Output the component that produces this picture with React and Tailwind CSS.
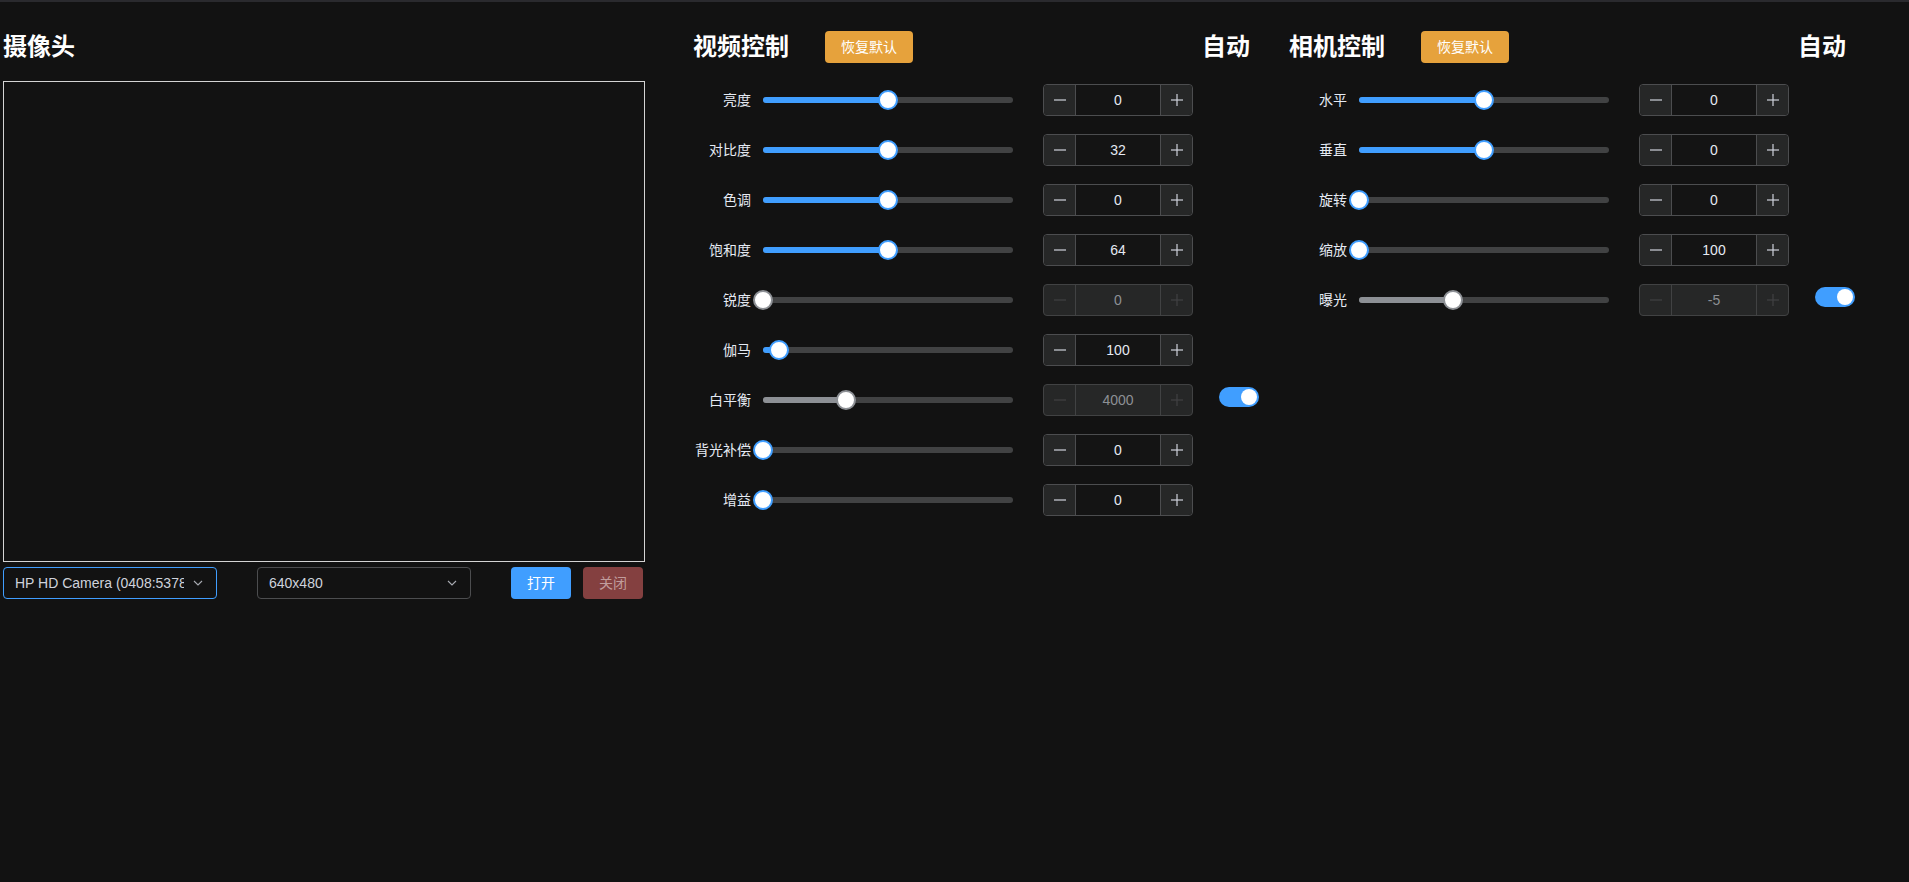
import React from "react";

const FONT = { fontFamily: '"Liberation Sans", "Noto Sans CJK SC", sans-serif' };

function MinusIcon({ color }) {
  return (
    <svg width="14" height="14" viewBox="0 0 14 14">
      <line x1="1" y1="7" x2="13" y2="7" stroke={color} strokeWidth="1.2" />
    </svg>
  );
}
function PlusIcon({ color }) {
  return (
    <svg width="14" height="14" viewBox="0 0 14 14">
      <line x1="1" y1="7" x2="13" y2="7" stroke={color} strokeWidth="1.2" />
      <line x1="7" y1="1" x2="7" y2="13" stroke={color} strokeWidth="1.2" />
    </svg>
  );
}

function Slider({ pct, disabled }) {
  return (
    <div className="relative w-[250px] h-[6px] rounded-full bg-[#414243]">
      <div
        className={
          disabled
            ? "absolute left-0 top-0 h-full rounded-full bg-[#8d9095]"
            : "absolute left-0 top-0 h-full rounded-full bg-[#409eff]"
        }
        style={{ width: pct + "%" }}
      />
      <div
        className={
          disabled
            ? "absolute top-1/2 w-[20px] h-[20px] -translate-x-1/2 -translate-y-1/2 rounded-full bg-white border-2 border-[#8d9095]"
            : "absolute top-1/2 w-[20px] h-[20px] -translate-x-1/2 -translate-y-1/2 rounded-full bg-white border-2 border-[#409eff]"
        }
        style={{ left: pct + "%" }}
      />
    </div>
  );
}

function InputNumber({ value, disabled }) {
  if (disabled) {
    return (
      <div className="flex w-[150px] h-[32px] rounded-[4px] border border-[#414243] bg-[#262727]">
        <div className="w-[32px] flex items-center justify-center border-r border-[#414243]">
          <MinusIcon color="#414243" />
        </div>
        <div className="flex-1 flex items-center justify-center text-[14px] text-[#8d9095]">{value}</div>
        <div className="w-[32px] flex items-center justify-center border-l border-[#414243]">
          <PlusIcon color="#414243" />
        </div>
      </div>
    );
  }
  return (
    <div className="flex w-[150px] h-[32px] rounded-[4px] border border-[#4c4d4f] bg-[#141414]">
      <div className="w-[32px] flex items-center justify-center border-r border-[#4c4d4f] bg-[#262727] rounded-l-[4px]">
        <MinusIcon color="#cfd3dc" />
      </div>
      <div className="flex-1 flex items-center justify-center text-[14px] text-[#e5eaf3]">{value}</div>
      <div className="w-[32px] flex items-center justify-center border-l border-[#4c4d4f] bg-[#262727] rounded-r-[4px]">
        <PlusIcon color="#cfd3dc" />
      </div>
    </div>
  );
}

function Toggle() {
  return (
    <div className="ml-[26px] mb-[6px] w-[40px] h-[20px] rounded-full bg-[#409eff] flex items-center justify-end pr-[2px]">
      <div className="w-[16px] h-[16px] rounded-full bg-white" />
    </div>
  );
}

function Row({ label, pct, value, disabled, toggle }) {
  return (
    <div className="flex items-center h-[50px]">
      <div className="w-[58px] text-right text-[14px] text-[#e5eaf3] whitespace-nowrap">{label}</div>
      <div className="ml-[12px]">
        <Slider pct={pct} disabled={disabled} />
      </div>
      <div className="ml-[30px]">
        <InputNumber value={value} disabled={disabled} />
      </div>
      {toggle && <Toggle />}
    </div>
  );
}

function Header({ title }) {
  return (
    <div className="flex items-center h-[32px]">
      <div className="w-[96px] text-[24px] font-bold text-white leading-none whitespace-nowrap">{title}</div>
      <button className="ml-[36px] w-[88px] h-[32px] rounded-[4px] bg-[#e6a23c] text-white text-[14px]">恢复默认</button>
      <div className="ml-[289px] text-[24px] font-bold text-white leading-none">自动</div>
    </div>
  );
}

function Chevron() {
  return (
    <svg width="12" height="12" viewBox="0 0 12 12">
      <polyline points="2,4 6,8 10,4" fill="none" stroke="#a8abb2" strokeWidth="1.1" />
    </svg>
  );
}

export default function App() {
  const video = [
    { label: "亮度", pct: 50, value: "0" },
    { label: "对比度", pct: 50, value: "32" },
    { label: "色调", pct: 50, value: "0" },
    { label: "饱和度", pct: 50, value: "64" },
    { label: "锐度", pct: 0, value: "0", disabled: true },
    { label: "伽马", pct: 6.4, value: "100" },
    { label: "白平衡", pct: 33, value: "4000", disabled: true, toggle: true },
    { label: "背光补偿", pct: 0, value: "0" },
    { label: "增益", pct: 0, value: "0" },
  ];
  const camera = [
    { label: "水平", pct: 50, value: "0" },
    { label: "垂直", pct: 50, value: "0" },
    { label: "旋转", pct: 0, value: "0" },
    { label: "缩放", pct: 0, value: "100" },
    { label: "曝光", pct: 37.6, value: "-5", disabled: true, toggle: true },
  ];

  return (
    <div className="w-full h-[882px] bg-[#121212] border-t-2 border-[#2a2a2e] overflow-hidden" style={FONT}>
      <div className="flex pt-[29px]">
        {/* Camera column */}
        <div className="pl-[3px] w-[645px]">
          <div className="flex items-center h-[32px]">
            <div className="text-[24px] font-bold text-white leading-none">摄像头</div>
          </div>
          <div className="mt-[18px] w-[642px] h-[481px] border border-[#d4d4d4]" />
          <div className="mt-[5px] flex items-center">
            <div className="w-[214px] h-[32px] rounded-[4px] border border-[#409eff] flex items-center pl-[11px] pr-[12px]">
              <div className="flex-1 overflow-hidden whitespace-nowrap text-[14px] text-[#cfd3dc]">HP HD Camera (0408:5378)</div>
              <div className="ml-[8px] flex items-center"><Chevron /></div>
            </div>
            <div className="ml-[40px] w-[214px] h-[32px] rounded-[4px] border border-[#4c4d4f] flex items-center pl-[11px] pr-[12px]">
              <div className="flex-1 overflow-hidden whitespace-nowrap text-[14px] text-[#cfd3dc]">640x480</div>
              <div className="ml-[8px] flex items-center"><Chevron /></div>
            </div>
            <button className="ml-[40px] w-[60px] h-[32px] rounded-[4px] bg-[#409eff] text-white text-[14px]">打开</button>
            <button className="ml-[12px] w-[60px] h-[32px] rounded-[4px] bg-[#844040] text-[#c19d9d] text-[14px]">关闭</button>
          </div>
        </div>

        {/* Video control column */}
        <div className="ml-[48px] w-[596px]">
          <Header title="视频控制" />
          <div className="mt-[12px] flex flex-col">
            {video.map((r) => (
              <Row key={r.label} {...r} />
            ))}
          </div>
        </div>

        {/* Camera control column */}
        <div className="w-[600px]">
          <Header title="相机控制" />
          <div className="mt-[12px] flex flex-col">
            {camera.map((r) => (
              <Row key={r.label} {...r} />
            ))}
          </div>
        </div>
      </div>
    </div>
  );
}
